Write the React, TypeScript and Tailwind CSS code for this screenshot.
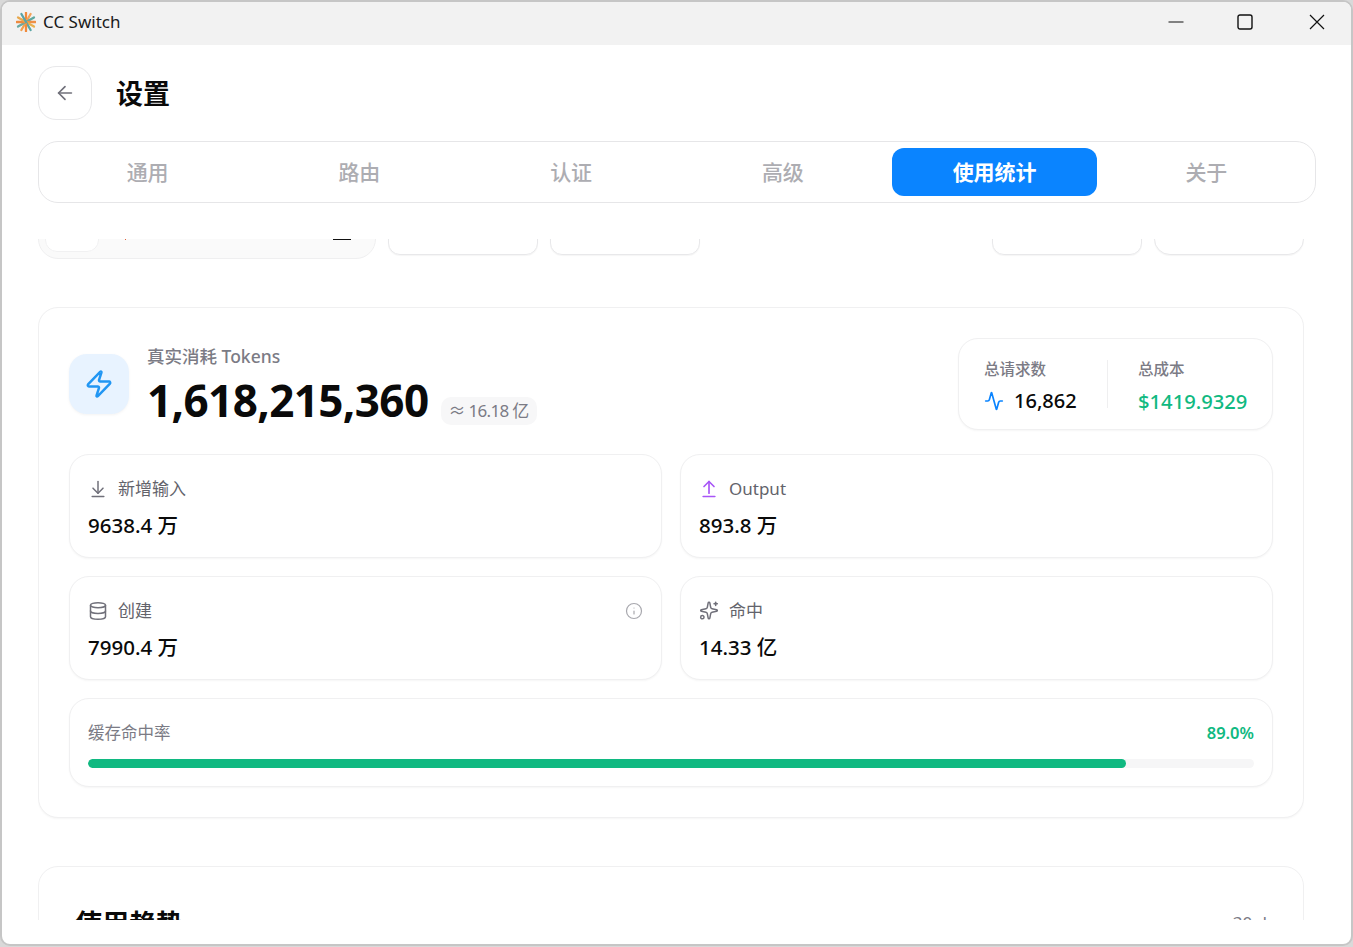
import React from 'react';
import {
  Activity,
  ArrowDownToLine,
  ArrowLeft,
  ArrowUpFromLine,
  Database,
  Info,
  Sparkles,
  Zap,
} from 'lucide-react';

const TABS = ['通用', '路由', '认证', '高级', '使用统计', '关于'];

const LOGO_COLORS = ['#f08a3c', '#f4a259', '#5fa8a0', '#ef8f45', '#e9b04f', '#5aa6a6', '#f08a3c', '#f2a04e', '#6aa9a2', '#ee8a3f', '#e8a94f', '#58a3a8'];

function Logo() {
  return (
    <svg width="20" height="20" viewBox="0 0 20 20" className="shrink-0">
      {LOGO_COLORS.map((color, i) => (
        <line
          key={i}
          x1="10"
          y1="10"
          x2="10"
          y2="0.8"
          stroke={color}
          strokeWidth="2.3"
          strokeLinecap="round"
          transform={`rotate(${i * 30} 10 10)`}
        />
      ))}
    </svg>
  );
}

function TitleBar() {
  return (
    <div className="flex h-[43px] shrink-0 items-center justify-between bg-[#f2f2f2] pb-[3px] pl-[14px]">
      <div className="flex items-center gap-[7px]">
        <Logo />
        <span className="text-[17px] text-[#1a1a1a]">CC Switch</span>
      </div>
      <div className="flex items-center">
        <div className="flex w-[63px] justify-center">
          <svg width="16" height="16" viewBox="0 0 16 16">
            <line x1="0.5" y1="8" x2="15.5" y2="8" stroke="#111" strokeWidth="1" />
          </svg>
        </div>
        <div className="flex w-[75px] justify-center">
          <svg width="16" height="16" viewBox="0 0 16 16">
            <rect x="1" y="1" width="14" height="14" rx="2" fill="none" stroke="#111" strokeWidth="1.4" />
          </svg>
        </div>
        <div className="flex w-[69px] justify-center">
          <svg width="16" height="16" viewBox="0 0 16 16">
            <path d="M1 1l14 14M15 1L1 15" stroke="#111" strokeWidth="1.2" fill="none" />
          </svg>
        </div>
      </div>
    </div>
  );
}

function StatCard({
  icon,
  label,
  value,
  extra,
}: {
  icon: React.ReactNode;
  label: string;
  value: string;
  extra?: React.ReactNode;
}) {
  return (
    <div className="h-[104px] rounded-[20px] border border-[#f0f0f1] bg-white px-[18px] pt-[20px] shadow-[0_1px_2px_rgba(0,0,0,0.04)]">
      <div className="flex h-[27px] items-center gap-[10px]">
        <span className="flex w-[20px] justify-center">{icon}</span>
        <span className="flex-1 text-[17px] leading-none text-[#63636b]">{label}</span>
        {extra}
      </div>
      <div className="mt-[8px] text-[20.5px] leading-[30px] font-medium text-[#0a0a0a]">{value}</div>
    </div>
  );
}

export default function App() {
  return (
    <div className="h-[947px] w-[1353px] overflow-hidden bg-[#d9d9d9] font-['Noto_Sans','Noto_Sans_CJK_SC',sans-serif]">
      <div className="flex h-[946px] flex-col overflow-hidden rounded-[10px] border-2 border-[#c6c6c6] bg-white">
        <TitleBar />
        <div className="flex flex-1 flex-col pl-[36px] pr-[35px]">
          {/* header */}
          <div className="mt-[21px] flex items-center gap-[24px]">
            <button className="flex h-[54px] w-[54px] items-center justify-center rounded-[18px] border border-[#e8e8ea] bg-white">
              <ArrowLeft className="h-[22px] w-[22px] text-[#70707a]" strokeWidth={1.8} />
            </button>
            <h1 className="text-[27px] leading-none font-bold text-[#0a0a0a]">设置</h1>
          </div>

          {/* tabs */}
          <div className="mt-[21px] grid h-[62px] grid-cols-6 gap-[6.5px] rounded-[20px] border border-[#e6e6e8] bg-white p-[6px]">
            {TABS.map((tab) => (
              <div
                key={tab}
                className={
                  tab === '使用统计'
                    ? 'flex items-center justify-center rounded-[12px] bg-[#0a84ff] pt-[2px] text-[21px] font-semibold text-white'
                    : 'flex items-center justify-center pt-[2px] text-[21px] font-medium text-[#adadb2]'
                }
              >
                {tab}
              </div>
            ))}
          </div>

          {/* scrolled content */}
          <div className="mt-[36px] h-[681px] w-[1266px] overflow-hidden">
            <div className="-mt-[40px] flex items-center">
              <div className="flex h-[60px] w-[338px] items-start rounded-[20px] border border-[#efeff0] bg-[#fafafa] p-[6px]">
                <div className="h-[46px] w-[54px] rounded-[12px] border border-[#f1f1f2] bg-white" />
                <div className="mt-[33px] ml-[26px] h-[1px] w-[1px] bg-[#e0623a]" />
                <div className="mt-[33px] ml-[207px] h-[1px] w-[18px] bg-[#111]" />
              </div>
              <div className="ml-[12px] h-[52px] w-[150px] rounded-[12px] border border-[#e8e8ea] bg-white shadow-[0_1px_1px_rgba(0,0,0,0.04)]" />
              <div className="ml-[12px] h-[52px] w-[150px] rounded-[12px] border border-[#e8e8ea] bg-white shadow-[0_1px_1px_rgba(0,0,0,0.04)]" />
              <div className="ml-auto h-[52px] w-[150px] rounded-[12px] border border-[#e8e8ea] bg-white shadow-[0_1px_1px_rgba(0,0,0,0.04)]" />
              <div className="ml-[12px] h-[52px] w-[150px] rounded-[16px] border border-[#e8e8ea] bg-white shadow-[0_1px_1px_rgba(0,0,0,0.04)]" />
            </div>

            {/* token summary */}
            <div className="mt-[48px] h-[511px] rounded-[20px] border border-[#f0f0f1] bg-white px-[30px] pt-[30px] shadow-[0_1px_2px_rgba(0,0,0,0.04)]">
              <div className="flex h-[92px] items-center justify-between">
                <div className="flex items-center gap-[18px]">
                  <div className="flex h-[60px] w-[60px] items-center justify-center rounded-[18px] bg-[#e8f3ff] shadow-[0_1px_3px_rgba(0,0,0,0.05)]">
                    <Zap className="h-[30px] w-[30px] text-[#2196f3]" strokeWidth={2} />
                  </div>
                  <div className="mt-[6px]">
                    <div className="text-[17.5px] leading-[22px] font-medium text-[#7b7b85]">真实消耗 Tokens</div>
                    <div className="mt-[3px] flex items-end gap-[12px]">
                      <span className="text-[44px] leading-[60px] font-bold tracking-[-0.6px] text-[#0a0a0a]">1,618,215,360</span>
                      <span className="mb-[5px] rounded-[10px] bg-[#f7f7f8] px-[8px] py-[2px] text-[17px] leading-[24px] tracking-[-0.7px] text-[#7b7b85]">≈ 16.18 亿</span>
                    </div>
                  </div>
                </div>
                <div className="flex h-[92px] w-[315px] items-center rounded-[20px] border border-[#f0f0f1] bg-white pl-[25px] shadow-[0_1px_2px_rgba(0,0,0,0.04)]">
                  <div className="w-[123px] pt-[7px]">
                    <div className="text-[15.5px] leading-[20px] font-medium text-[#7b7b85]">总请求数</div>
                    <div className="mt-[7px] flex items-center gap-[10px]">
                      <Activity className="h-[20px] w-[20px] text-[#0a84ff]" strokeWidth={2} />
                      <span className="text-[20px] leading-[30px] font-medium text-[#0a0a0a]">16,862</span>
                    </div>
                  </div>
                  <div className="h-[48px] w-px bg-[#efeff0]" />
                  <div className="ml-[30px] pt-[7px]">
                    <div className="text-[15.5px] leading-[20px] font-medium text-[#7b7b85]">总成本</div>
                    <div className="mt-[7px] text-[20.2px] leading-[30px] font-medium text-[#10b981]">$1419.9329</div>
                  </div>
                </div>
              </div>

              <div className="mt-[24px] grid grid-cols-2 gap-[18px]">
                <StatCard
                  icon={<ArrowDownToLine className="h-[20px] w-[20px] text-[#70707a]" strokeWidth={1.8} />}
                  label="新增输入"
                  value="9638.4 万"
                />
                <StatCard
                  icon={<ArrowUpFromLine className="h-[20px] w-[20px] text-[#a855f7]" strokeWidth={2} />}
                  label="Output"
                  value="893.8 万"
                />
                <StatCard
                  icon={<Database className="h-[20px] w-[20px] text-[#70707a]" strokeWidth={1.8} />}
                  label="创建"
                  value="7990.4 万"
                  extra={<Info className="h-[18px] w-[18px] text-[#a8a8ae]" strokeWidth={1.6} />}
                />
                <StatCard
                  icon={<Sparkles className="h-[21px] w-[21px] text-[#70707a]" strokeWidth={1.8} />}
                  label="命中"
                  value="14.33 亿"
                />
              </div>

              <div className="mt-[18px] h-[89px] rounded-[20px] border border-[#f0f0f1] bg-white px-[18px] pt-[24px] shadow-[0_1px_2px_rgba(0,0,0,0.04)]">
                <div className="flex h-[20px] items-center justify-between">
                  <span className="text-[16.5px] text-[#7b7b85]">缓存命中率</span>
                  <span className="text-[16.5px] font-semibold text-[#10b981]">89.0%</span>
                </div>
                <div className="mt-[16px] h-[9px] overflow-hidden rounded-full bg-[#f6f6f7]">
                  <div className="h-full rounded-full bg-[#10b981]" style={{ width: '89%' }} />
                </div>
              </div>
            </div>

            {/* trend */}
            <div className="mt-[48px] h-[200px] rounded-[20px] border border-[#f0f0f1] bg-white px-[36px] pt-[39px]">
              <div className="flex items-start justify-between">
                <span className="text-[27px] leading-[36px] font-bold text-[#0a0a0a]">使用趋势</span>
                <span className="mt-[4px] text-[17px] text-[#7b7b85]">30 d</span>
              </div>
            </div>
          </div>
        </div>
      </div>
    </div>
  );
}
